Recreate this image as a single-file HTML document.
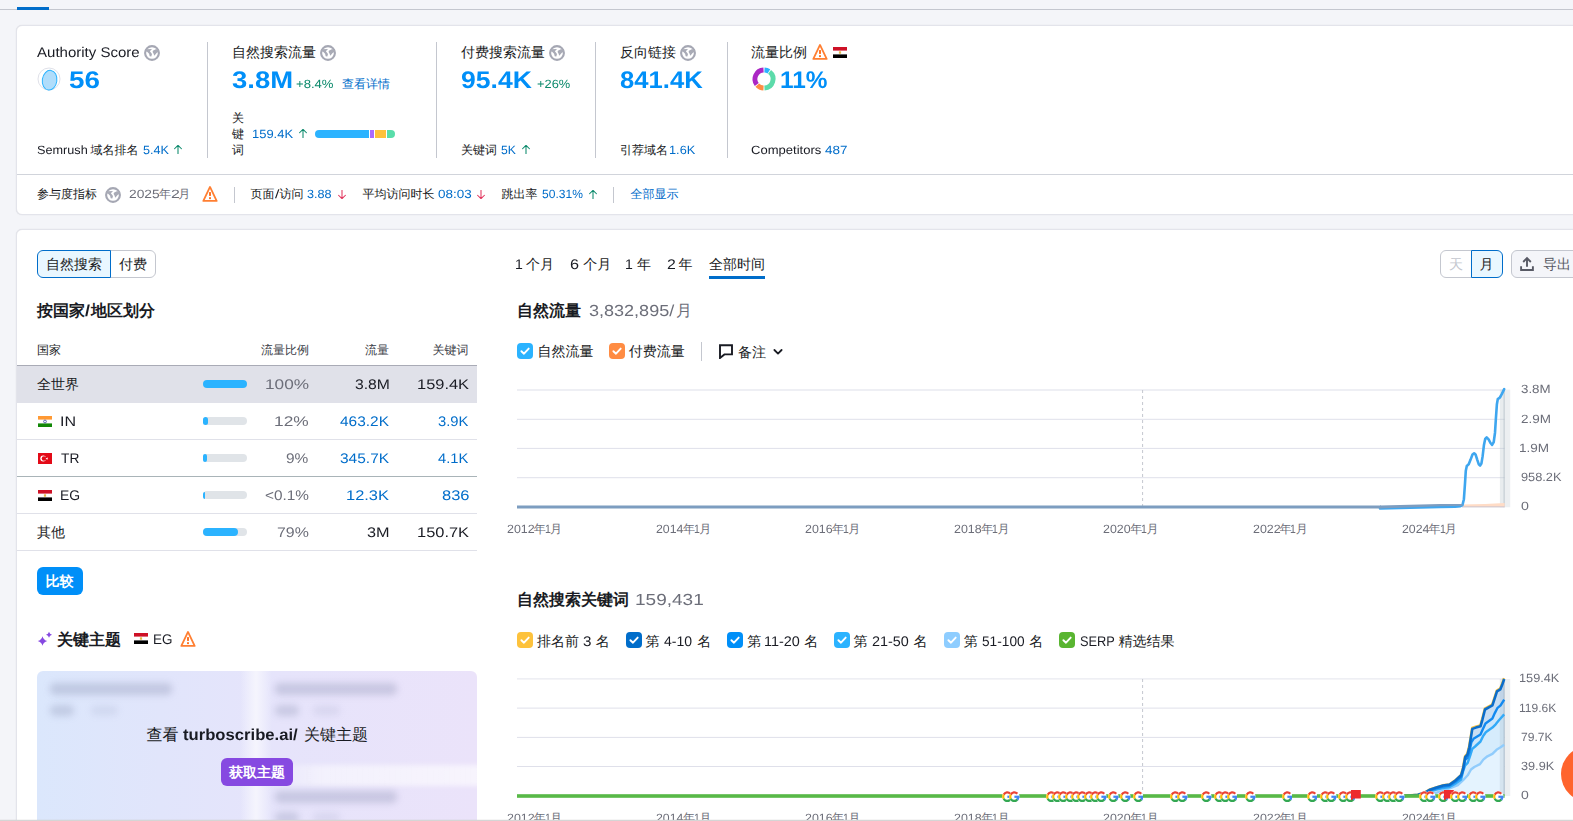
<!DOCTYPE html>
<html><head><meta charset="utf-8"><title>Domain Overview</title>
<style>
html,body{margin:0;padding:0;}
body{width:1573px;height:821px;overflow:hidden;background:#f4f5f9;position:relative;font-family:"Liberation Sans",sans-serif;}
.a{position:absolute;display:block;}
.t{position:absolute;white-space:nowrap;font-family:"Liberation Sans",sans-serif;text-rendering:geometricPrecision;}
.s{transform-origin:0 50%;}
b{font-weight:700;}
</style></head><body>
<div class="a" style="left:0px;top:9px;width:1573px;height:1px;background:#c4c7cf;"></div>
<div class="a" style="left:17px;top:7px;width:32px;height:3px;background:#006dca;"></div>
<div class="a" style="left:16px;top:25px;width:1600px;height:190px;background:#fff;border:1px solid #e3e4eb;border-radius:6px;box-sizing:border-box;box-shadow:0 0 1px rgba(25,27,35,.16);"></div>
<div class="a" style="left:17px;top:174px;width:1556px;height:1px;background:#d1d4db;"></div>
<div class="a" style="left:207px;top:42px;width:1px;height:116px;background:#c4c7cf;"></div>
<div class="a" style="left:436px;top:42px;width:1px;height:116px;background:#c4c7cf;"></div>
<div class="a" style="left:595px;top:42px;width:1px;height:116px;background:#c4c7cf;"></div>
<div class="a" style="left:727px;top:42px;width:1px;height:116px;background:#c4c7cf;"></div>
<div class="t s" style="left:37.40px;top:42.00px;font-size:14px;line-height:20px;color:#191b23;transform:scaleX(1.0733);">Authority Score</div>
<svg class="a" style="left:144px;top:45px;" width="16" height="16" viewBox="0 0 16 16"><circle cx="8" cy="8" r="6.9" fill="none" stroke="#a5a7b3" stroke-width="2.1"/><path d="M1.2 4.2 L8 4.0 L5.9 6.2 L8 9.1 L7.3 11.6 L5.7 11.2 L5.1 8.7 L3.1 6.8 L1.1 6.2 Z" fill="#a9abb6"/><path d="M8.9 5.8 L11.7 4.2 L14.9 4.2 L14.9 6.4 L12.6 7.9 L10.3 10.8 L9.5 8.4 L8.6 7.1 Z" fill="#a9abb6"/></svg>
<svg class="a" style="left:37px;top:67px;" width="24" height="24" viewBox="0 0 24 24"><circle cx="12" cy="12" r="11" fill="#fff" stroke="#e0e1e9" stroke-width="1"/><ellipse cx="12.6" cy="13.2" rx="7.3" ry="9.9" transform="rotate(8 12.6 13.2)" fill="#b0ddfb" stroke="#2bb3ff" stroke-width="1"/></svg>
<div class="t s" style="left:68.53px;top:67.00px;font-size:24px;line-height:28px;color:#008ff8;transform:scaleX(1.1582);font-weight:700;">56</div>
<div class="t s" style="left:36.74px;top:141.00px;font-size:12px;line-height:18px;color:#191b23;transform:scaleX(1.0552);">Semrush</div>
<div class="t" style="left:90.5px;top:141.00px;font-size:12px;line-height:18px;color:#191b23;">域名排名</div>
<div class="t s" style="left:142.57px;top:141.00px;font-size:12px;line-height:18px;color:#006dca;transform:scaleX(1.0500);">5.4K</div>
<svg class="a" style="left:173.5px;top:145.0px;" width="8" height="9" viewBox="0 0 8 9"><path d="M4 8.8 V0.9 M0.55 3.75 L4 0.3 L7.45 3.75" fill="none" stroke="#0c8a6c" stroke-width="1.05" stroke-linecap="round" stroke-linejoin="round"/></svg>
<div class="t" style="left:232px;top:42.00px;font-size:14px;line-height:20px;color:#191b23;">自然搜索流量</div>
<svg class="a" style="left:320px;top:45px;" width="16" height="16" viewBox="0 0 16 16"><circle cx="8" cy="8" r="6.9" fill="none" stroke="#a5a7b3" stroke-width="2.1"/><path d="M1.2 4.2 L8 4.0 L5.9 6.2 L8 9.1 L7.3 11.6 L5.7 11.2 L5.1 8.7 L3.1 6.8 L1.1 6.2 Z" fill="#a9abb6"/><path d="M8.9 5.8 L11.7 4.2 L14.9 4.2 L14.9 6.4 L12.6 7.9 L10.3 10.8 L9.5 8.4 L8.6 7.1 Z" fill="#a9abb6"/></svg>
<div class="t s" style="left:231.88px;top:67.00px;font-size:24px;line-height:28px;color:#008ff8;transform:scaleX(1.1443);font-weight:700;">3.8M</div>
<div class="t s" style="left:296.22px;top:75.00px;font-size:12px;line-height:18px;color:#0c8a6c;transform:scaleX(1.0917);">+8.4%</div>
<div class="t" style="left:342px;top:75.00px;font-size:12px;line-height:18px;color:#006dca;">查看详情</div>
<div class="t" style="left:232px;top:126.00px;font-size:12px;line-height:16px;color:#191b23;height:48px;top:110px;">关<br>键<br>词</div>
<div class="t s" style="left:252.05px;top:125.00px;font-size:12px;line-height:18px;color:#006dca;transform:scaleX(1.0786);">159.4K</div>
<svg class="a" style="left:299px;top:129.0px;" width="8" height="9" viewBox="0 0 8 9"><path d="M4 8.8 V0.9 M0.55 3.75 L4 0.3 L7.45 3.75" fill="none" stroke="#0c8a6c" stroke-width="1.05" stroke-linecap="round" stroke-linejoin="round"/></svg>
<div class="a" style="left:315px;top:130px;width:80px;height:8px;border-radius:4px;overflow:hidden;background:#fff;"><div class="a" style="left:0;top:0;width:54px;height:8px;background:#2bb3ff"></div><div class="a" style="left:55px;top:0;width:4px;height:8px;background:#ab6cfe"></div><div class="a" style="left:60px;top:0;width:11px;height:8px;background:#fdc23c"></div><div class="a" style="left:72px;top:0;width:8px;height:8px;background:#59ddaa"></div></div>
<div class="t" style="left:461px;top:42.00px;font-size:14px;line-height:20px;color:#191b23;">付费搜索流量</div>
<svg class="a" style="left:549px;top:45px;" width="16" height="16" viewBox="0 0 16 16"><circle cx="8" cy="8" r="6.9" fill="none" stroke="#a5a7b3" stroke-width="2.1"/><path d="M1.2 4.2 L8 4.0 L5.9 6.2 L8 9.1 L7.3 11.6 L5.7 11.2 L5.1 8.7 L3.1 6.8 L1.1 6.2 Z" fill="#a9abb6"/><path d="M8.9 5.8 L11.7 4.2 L14.9 4.2 L14.9 6.4 L12.6 7.9 L10.3 10.8 L9.5 8.4 L8.6 7.1 Z" fill="#a9abb6"/></svg>
<div class="t s" style="left:460.73px;top:67.00px;font-size:24px;line-height:28px;color:#008ff8;transform:scaleX(1.1054);font-weight:700;">95.4K</div>
<div class="t s" style="left:537.23px;top:75.00px;font-size:12px;line-height:18px;color:#0c8a6c;transform:scaleX(1.0700);">+26%</div>
<div class="t" style="left:461px;top:141.00px;font-size:12px;line-height:18px;color:#191b23;">关键词</div>
<div class="t s" style="left:500.99px;top:141.00px;font-size:12px;line-height:18px;color:#006dca;transform:scaleX(1.0143);">5K</div>
<svg class="a" style="left:521.5px;top:145.0px;" width="8" height="9" viewBox="0 0 8 9"><path d="M4 8.8 V0.9 M0.55 3.75 L4 0.3 L7.45 3.75" fill="none" stroke="#0c8a6c" stroke-width="1.05" stroke-linecap="round" stroke-linejoin="round"/></svg>
<div class="t" style="left:620px;top:42.00px;font-size:14px;line-height:20px;color:#191b23;">反向链接</div>
<svg class="a" style="left:680px;top:45px;" width="16" height="16" viewBox="0 0 16 16"><circle cx="8" cy="8" r="6.9" fill="none" stroke="#a5a7b3" stroke-width="2.1"/><path d="M1.2 4.2 L8 4.0 L5.9 6.2 L8 9.1 L7.3 11.6 L5.7 11.2 L5.1 8.7 L3.1 6.8 L1.1 6.2 Z" fill="#a9abb6"/><path d="M8.9 5.8 L11.7 4.2 L14.9 4.2 L14.9 6.4 L12.6 7.9 L10.3 10.8 L9.5 8.4 L8.6 7.1 Z" fill="#a9abb6"/></svg>
<div class="t s" style="left:619.60px;top:67.00px;font-size:24px;line-height:28px;color:#008ff8;transform:scaleX(1.0684);font-weight:700;">841.4K</div>
<div class="t" style="left:620px;top:141.00px;font-size:12px;line-height:18px;color:#191b23;">引荐域名</div>
<div class="t s" style="left:668.86px;top:141.00px;font-size:12px;line-height:18px;color:#006dca;transform:scaleX(1.0628);">1.6K</div>
<div class="t" style="left:751px;top:42.00px;font-size:14px;line-height:20px;color:#191b23;">流量比例</div>
<svg class="a" style="left:812.0px;top:44.0px;" width="16" height="16" viewBox="0 0 16 16"><path d="M8 0.95 L14.65 14.9 H1.35 Z" fill="none" stroke="#ff7f32" stroke-width="1.8" stroke-linejoin="round"/><rect x="7" y="6.1" width="2" height="3.8" fill="#ff7424"/><rect x="7" y="11.2" width="2" height="1.9" fill="#ff7424"/></svg>
<svg class="a" style="left:833px;top:47px;" width="14" height="11" viewBox="0 0 14 11"><rect width="14" height="11" fill="#fff"/><rect width="14" height="3.6" fill="#ce1126"/><rect y="7.4" width="14" height="3.6" fill="#000"/><rect x="5.9" y="4.3" width="2.2" height="2.4" fill="#e3b94b"/></svg>
<svg class="a" style="left:750px;top:65px;" width="28" height="28" viewBox="0 0 28 28"><path d="M14.60 2.52 A11.5 11.5 0 0 1 20.26 4.36 L17.59 8.46 A6.6 6.6 0 0 0 14.35 7.41 Z" fill="#2bb3ff"/><path d="M21.08 4.94 A11.5 11.5 0 0 1 14.60 25.48 L14.35 20.59 A6.6 6.6 0 0 0 18.06 8.80 Z" fill="#5cdbaa"/><path d="M13.40 25.48 A11.5 11.5 0 0 1 5.45 21.70 L9.10 18.42 A6.6 6.6 0 0 0 13.65 20.59 Z" fill="#ff8c43"/><path d="M4.82 20.92 A11.5 11.5 0 0 1 13.40 2.52 L13.65 7.41 A6.6 6.6 0 0 0 8.73 17.97 Z" fill="#ab27c4"/></svg>
<div class="t s" style="left:779.52px;top:67.00px;font-size:24px;line-height:28px;color:#008ff8;transform:scaleX(1.0164);font-weight:700;">11%</div>
<div class="t s" style="left:750.72px;top:141.00px;font-size:12px;line-height:18px;color:#191b23;transform:scaleX(1.0861);">Competitors</div>
<div class="t s" style="left:825.22px;top:141.00px;font-size:12px;line-height:18px;color:#006dca;transform:scaleX(1.1242);">487</div>
<div class="t" style="left:37px;top:185.00px;font-size:12px;line-height:18px;color:#191b23;">参与度指标</div>
<svg class="a" style="left:105px;top:187px;" width="16" height="16" viewBox="0 0 16 16"><circle cx="8" cy="8" r="6.9" fill="none" stroke="#a5a7b3" stroke-width="2.1"/><path d="M1.2 4.2 L8 4.0 L5.9 6.2 L8 9.1 L7.3 11.6 L5.7 11.2 L5.1 8.7 L3.1 6.8 L1.1 6.2 Z" fill="#a9abb6"/><path d="M8.9 5.8 L11.7 4.2 L14.9 4.2 L14.9 6.4 L12.6 7.9 L10.3 10.8 L9.5 8.4 L8.6 7.1 Z" fill="#a9abb6"/></svg>
<div class="t s" style="left:129.18px;top:185.00px;font-size:12px;line-height:18px;color:#6c6e79;transform:scaleX(1.1473);">2025</div>
<div class="t" style="left:159.1px;top:185.00px;font-size:12px;line-height:18px;color:#6c6e79;">年</div>
<div class="t s" style="left:170.77px;top:185.00px;font-size:12px;line-height:18px;color:#6c6e79;transform:scaleX(1.3273);">2</div>
<div class="t" style="left:178.3px;top:185.00px;font-size:12px;line-height:18px;color:#6c6e79;">月</div>
<svg class="a" style="left:202.0px;top:186.0px;" width="16" height="16" viewBox="0 0 16 16"><path d="M8 0.95 L14.65 14.9 H1.35 Z" fill="none" stroke="#ff7f32" stroke-width="1.8" stroke-linejoin="round"/><rect x="7" y="6.1" width="2" height="3.8" fill="#ff7424"/><rect x="7" y="11.2" width="2" height="1.9" fill="#ff7424"/></svg>
<div class="a" style="left:234px;top:187px;width:1px;height:16px;background:#c4c7cf;"></div>
<div class="t" style="left:250.5px;top:185.00px;font-size:12px;line-height:18px;color:#191b23;">页面</div>
<div class="t s" style="left:275.30px;top:185.00px;font-size:12px;line-height:18px;color:#191b23;transform:scaleX(1.3231);">/</div>
<div class="t" style="left:279.4px;top:185.00px;font-size:12px;line-height:18px;color:#191b23;">访问</div>
<div class="t s" style="left:307.37px;top:185.00px;font-size:12px;line-height:18px;color:#006dca;transform:scaleX(1.0503);">3.88</div>
<svg class="a" style="left:337.5px;top:189.9px;" width="8" height="9" viewBox="0 0 8 9"><path d="M4 0.2 V8.1 M0.55 5.25 L4 8.7 L7.45 5.25" fill="none" stroke="#e2365e" stroke-width="1.05" stroke-linecap="round" stroke-linejoin="round"/></svg>
<div class="t" style="left:362.5px;top:185.00px;font-size:12px;line-height:18px;color:#191b23;">平均访问时长</div>
<div class="t s" style="left:437.94px;top:185.00px;font-size:12px;line-height:18px;color:#006dca;transform:scaleX(1.1207);">08:03</div>
<svg class="a" style="left:477px;top:189.9px;" width="8" height="9" viewBox="0 0 8 9"><path d="M4 0.2 V8.1 M0.55 5.25 L4 8.7 L7.45 5.25" fill="none" stroke="#e2365e" stroke-width="1.05" stroke-linecap="round" stroke-linejoin="round"/></svg>
<div class="t" style="left:501.5px;top:185.00px;font-size:12px;line-height:18px;color:#191b23;">跳出率</div>
<div class="t s" style="left:541.70px;top:185.00px;font-size:12px;line-height:18px;color:#006dca;transform:scaleX(1.0038);">50.31%</div>
<svg class="a" style="left:588.5px;top:189.6px;" width="8" height="9" viewBox="0 0 8 9"><path d="M4 8.8 V0.9 M0.55 3.75 L4 0.3 L7.45 3.75" fill="none" stroke="#0c8a6c" stroke-width="1.05" stroke-linecap="round" stroke-linejoin="round"/></svg>
<div class="a" style="left:613px;top:187px;width:1px;height:16px;background:#c4c7cf;"></div>
<div class="t" style="left:630.5px;top:185.00px;font-size:12px;line-height:18px;color:#006dca;">全部显示</div>
<div class="a" style="left:16px;top:229px;width:1600px;height:700px;background:#fff;border:1px solid #e3e4eb;border-radius:6px;box-sizing:border-box;box-shadow:0 0 1px rgba(25,27,35,.16);"></div>
<div class="a" style="left:110px;top:250px;width:46px;height:28px;background:#fff;border:1px solid #c4c7cf;border-radius:0 6px 6px 0;box-sizing:border-box;"></div>
<div class="a" style="left:37px;top:250px;width:74px;height:28px;background:#e9f7ff;border:1px solid #006dca;border-radius:6px 0 0 6px;box-sizing:border-box;"></div>
<div class="t" style="left:46px;top:254.00px;font-size:14px;line-height:20px;color:#191b23;">自然搜索</div>
<div class="t" style="left:119px;top:254.00px;font-size:14px;line-height:20px;color:#191b23;">付费</div>
<div class="t" style="left:37px;top:300.00px;font-size:16px;line-height:24px;color:#191b23;font-weight:700;">按国家</div>
<div class="t s" style="left:85.16px;top:300.00px;font-size:16px;line-height:24px;color:#191b23;transform:scaleX(1.1152);font-weight:700;">/</div>
<div class="t" style="left:91px;top:300.00px;font-size:16px;line-height:24px;color:#191b23;font-weight:700;">地区划分</div>
<div class="t" style="left:37px;top:341.00px;font-size:12px;line-height:18px;color:#191b23;">国家</div>
<div class="t" style="right:1264px;top:341.00px;font-size:12px;line-height:18px;color:#3b3d47;text-align:right;">流量比例</div>
<div class="t" style="right:1184px;top:341.00px;font-size:12px;line-height:18px;color:#3b3d47;text-align:right;">流量</div>
<div class="t" style="right:1104.5px;top:341.00px;font-size:12px;line-height:18px;color:#3b3d47;text-align:right;">关键词</div>
<div class="a" style="left:17px;top:365px;width:460px;height:1px;background:#a9abb6;"></div>
<div class="a" style="left:17px;top:366px;width:460px;height:37px;background:#e0e1e9;"></div>
<div class="t" style="left:37px;top:374.00px;font-size:14px;line-height:20px;color:#191b23;">全世界</div>
<div class="a" style="left:203px;top:380.3px;width:44px;height:8px;background:#e0e4e8;border-radius:4px;"></div>
<div class="a" style="left:203px;top:380.3px;width:44px;height:8px;background:#2bb3ff;border-radius:4px;"></div>
<div class="t s" style="left:264.79px;top:374.00px;font-size:14px;line-height:20px;color:#6c6e79;transform:scaleX(1.2286);">100%</div>
<div class="t s" style="left:354.84px;top:374.00px;font-size:14px;line-height:20px;color:#191b23;transform:scaleX(1.1220);">3.8M</div>
<div class="t s" style="left:416.65px;top:374.00px;font-size:14px;line-height:20px;color:#191b23;transform:scaleX(1.1727);">159.4K</div>
<svg class="a" style="left:38px;top:416.3px;" width="14" height="11" viewBox="0 0 14 11"><rect width="14" height="11" fill="#fff"/><rect width="14" height="3.6" fill="#f93"/><rect y="7.4" width="14" height="3.6" fill="#128807"/><circle cx="7" cy="5.5" r="1.4" fill="none" stroke="#3a4aa0" stroke-width="0.8"/></svg>
<div class="t s" style="left:59.97px;top:411.00px;font-size:14px;line-height:20px;color:#191b23;transform:scaleX(1.1441);">IN</div>
<div class="a" style="left:203px;top:417.3px;width:44px;height:8px;background:#e0e4e8;border-radius:4px;"></div>
<div class="a" style="left:203px;top:417.3px;width:5px;height:8px;background:#2bb3ff;border-radius:4px;"></div>
<div class="t s" style="left:274.08px;top:411.00px;font-size:14px;line-height:20px;color:#6c6e79;transform:scaleX(1.2370);">12%</div>
<div class="t s" style="left:339.79px;top:411.00px;font-size:14px;line-height:20px;color:#006dca;transform:scaleX(1.1040);">463.2K</div>
<div class="t s" style="left:438.17px;top:411.00px;font-size:14px;line-height:20px;color:#006dca;transform:scaleX(1.0560);">3.9K</div>
<div class="a" style="left:17px;top:439.0px;width:460px;height:1px;background:#e0e1e9;"></div>
<svg class="a" style="left:38px;top:453.3px;" width="14" height="11" viewBox="0 0 14 11"><rect width="14" height="11" fill="#e30a17"/><circle cx="5.2" cy="5.5" r="2.9" fill="#fff"/><circle cx="6" cy="5.5" r="2.3" fill="#e30a17"/><path d="M7.6 5.5 L10 4.5 L9.3 6.8 Z" fill="#fff"/></svg>
<div class="t s" style="left:61.03px;top:448.00px;font-size:14px;line-height:20px;color:#191b23;transform:scaleX(0.9816);">TR</div>
<div class="a" style="left:203px;top:454.3px;width:44px;height:8px;background:#e0e4e8;border-radius:4px;"></div>
<div class="a" style="left:203px;top:454.3px;width:4px;height:8px;background:#2bb3ff;border-radius:4px;"></div>
<div class="t s" style="left:286.31px;top:448.00px;font-size:14px;line-height:20px;color:#6c6e79;transform:scaleX(1.1033);">9%</div>
<div class="t s" style="left:339.65px;top:448.00px;font-size:14px;line-height:20px;color:#006dca;transform:scaleX(1.1072);">345.7K</div>
<div class="t s" style="left:438.31px;top:448.00px;font-size:14px;line-height:20px;color:#006dca;transform:scaleX(1.0513);">4.1K</div>
<div class="a" style="left:17px;top:476.0px;width:460px;height:1px;background:#a9b4b8;"></div>
<svg class="a" style="left:38px;top:490.3px;" width="14" height="11" viewBox="0 0 14 11"><rect width="14" height="11" fill="#fff"/><rect width="14" height="3.6" fill="#ce1126"/><rect y="7.4" width="14" height="3.6" fill="#000"/><rect x="5.9" y="4.3" width="2.2" height="2.4" fill="#e3b94b"/></svg>
<div class="t s" style="left:60.28px;top:485.00px;font-size:14px;line-height:20px;color:#191b23;transform:scaleX(0.9944);">EG</div>
<div class="a" style="left:203px;top:491.3px;width:44px;height:8px;background:#e0e4e8;border-radius:4px;"></div>
<div class="a" style="left:203px;top:491.8px;width:1.5px;height:7px;background:#2bb3ff;border-radius:2px 0 0 2px;"></div>
<div class="t s" style="left:264.68px;top:485.00px;font-size:14px;line-height:20px;color:#6c6e79;transform:scaleX(1.0958);">&lt;0.1%</div>
<div class="t s" style="left:345.86px;top:485.00px;font-size:14px;line-height:20px;color:#006dca;transform:scaleX(1.1724);">12.3K</div>
<div class="t s" style="left:441.56px;top:485.00px;font-size:14px;line-height:20px;color:#006dca;transform:scaleX(1.1797);">836</div>
<div class="a" style="left:17px;top:513.0px;width:460px;height:1px;background:#e0e1e9;"></div>
<div class="t" style="left:37px;top:522.00px;font-size:14px;line-height:20px;color:#191b23;">其他</div>
<div class="a" style="left:203px;top:528.3px;width:44px;height:8px;background:#e0e4e8;border-radius:4px;"></div>
<div class="a" style="left:203px;top:528.3px;width:35px;height:8px;background:#2bb3ff;border-radius:4px;"></div>
<div class="t s" style="left:276.85px;top:522.00px;font-size:14px;line-height:20px;color:#6c6e79;transform:scaleX(1.1364);">79%</div>
<div class="t s" style="left:367.32px;top:522.00px;font-size:14px;line-height:20px;color:#191b23;transform:scaleX(1.1606);">3M</div>
<div class="t s" style="left:416.65px;top:522.00px;font-size:14px;line-height:20px;color:#191b23;transform:scaleX(1.1727);">150.7K</div>
<div class="a" style="left:17px;top:550.0px;width:460px;height:1px;background:#e0e1e9;"></div>
<div class="a" style="left:37px;top:567px;width:46px;height:28px;background:#008ff8;border-radius:6px;"></div>
<div class="t" style="left:45.5px;top:571.00px;font-size:14px;line-height:20px;color:#fff;font-weight:700;">比较</div>
<svg class="a" style="left:37px;top:631px;" width="16" height="16" viewBox="0 0 16 16"><path d="M5.5 5.2 Q6.46 9.04 10.3 10 Q6.46 10.96 5.5 14.8 Q4.54 10.96 0.7000000000000002 10 Q4.54 9.04 5.5 5.2 Z" fill="#8649e1"/><path d="M12 0.7999999999999998 Q12.6 3.1999999999999997 15.0 3.8 Q12.6 4.4 12 6.8 Q11.4 4.4 9.0 3.8 Q11.4 3.1999999999999997 12 0.7999999999999998 Z" fill="#8649e1"/></svg>
<div class="t" style="left:57px;top:629.00px;font-size:16px;line-height:24px;color:#191b23;font-weight:700;">关键主题</div>
<svg class="a" style="left:134px;top:633px;" width="14" height="11" viewBox="0 0 14 11"><rect width="14" height="11" fill="#fff"/><rect width="14" height="3.6" fill="#ce1126"/><rect y="7.4" width="14" height="3.6" fill="#000"/><rect x="5.9" y="4.3" width="2.2" height="2.4" fill="#e3b94b"/></svg>
<div class="t s" style="left:152.72px;top:629.00px;font-size:14px;line-height:20px;color:#191b23;transform:scaleX(0.9611);">EG</div>
<svg class="a" style="left:180.0px;top:631.0px;" width="16" height="16" viewBox="0 0 16 16"><path d="M8 0.95 L14.65 14.9 H1.35 Z" fill="none" stroke="#ff7f32" stroke-width="1.8" stroke-linejoin="round"/><rect x="7" y="6.1" width="2" height="3.8" fill="#ff7424"/><rect x="7" y="11.2" width="2" height="1.9" fill="#ff7424"/></svg>
<div class="a" style="left:37px;top:671px;width:440px;height:160px;border-radius:6px;overflow:hidden;background:linear-gradient(90deg,#dbe7fc 0%,#e1e5fb 28%,#e6e4fb 55%,#ebe3fa 100%);"><div class="a" style="left:203px;top:0;width:32px;height:160px;background:linear-gradient(90deg,rgba(255,255,255,0),rgba(255,255,255,.62) 50%,rgba(255,255,255,0));"></div><div class="a" style="left:222px;top:94px;width:225px;height:21px;background:linear-gradient(90deg,rgba(255,255,255,0),rgba(255,255,255,.5) 28%,rgba(255,255,255,.62));filter:blur(2.5px);"></div><div class="a" style="left:13px;top:12px;width:122px;height:12px;background:rgba(110,115,155,0.26);filter:blur(3.5px);border-radius:5px;"></div><div class="a" style="left:13px;top:34px;width:24px;height:11px;background:rgba(110,115,155,0.24);filter:blur(3.5px);border-radius:5px;"></div><div class="a" style="left:54px;top:35px;width:27px;height:9px;background:rgba(110,115,155,0.12);filter:blur(3.5px);border-radius:5px;"></div><div class="a" style="left:238px;top:12px;width:122px;height:12px;background:rgba(110,115,155,0.26);filter:blur(3.5px);border-radius:5px;"></div><div class="a" style="left:238px;top:34px;width:24px;height:11px;background:rgba(110,115,155,0.24);filter:blur(3.5px);border-radius:5px;"></div><div class="a" style="left:276px;top:35px;width:27px;height:9px;background:rgba(110,115,155,0.12);filter:blur(3.5px);border-radius:5px;"></div><div class="a" style="left:238px;top:120px;width:122px;height:12px;background:rgba(110,115,155,0.26);filter:blur(3.5px);border-radius:5px;"></div><div class="a" style="left:238px;top:141px;width:24px;height:11px;background:rgba(110,115,155,0.24);filter:blur(3.5px);border-radius:5px;"></div><div class="a" style="left:276px;top:142px;width:27px;height:9px;background:rgba(110,115,155,0.12);filter:blur(3.5px);border-radius:5px;"></div></div>
<div class="t" style="left:146.5px;top:724.00px;font-size:16px;line-height:24px;color:#191b23;">查看</div>
<div class="t s" style="left:182.94px;top:724.00px;font-size:16px;line-height:24px;color:#191b23;transform:scaleX(1.0403);font-weight:700;">turboscribe.ai/</div>
<div class="t" style="left:304px;top:724.00px;font-size:16px;line-height:24px;color:#191b23;">关键主题</div>
<div class="a" style="left:221px;top:758px;width:72px;height:28px;background:#8649e1;border-radius:6px;"></div>
<div class="t" style="left:229px;top:762.00px;font-size:14px;line-height:20px;color:#fff;font-weight:700;">获取主题</div>
<div class="t s" style="left:514.84px;top:254.00px;font-size:14px;line-height:20px;color:#191b23;transform:scaleX(1.0043);">1</div>
<div class="t" style="left:526px;top:254.00px;font-size:14px;line-height:20px;color:#191b23;">个月</div>
<div class="t s" style="left:569.73px;top:254.00px;font-size:14px;line-height:20px;color:#191b23;transform:scaleX(1.1608);">6</div>
<div class="t" style="left:583.2px;top:254.00px;font-size:14px;line-height:20px;color:#191b23;">个月</div>
<div class="t s" style="left:624.84px;top:254.00px;font-size:14px;line-height:20px;color:#191b23;transform:scaleX(1.0043);">1</div>
<div class="t" style="left:637px;top:254.00px;font-size:14px;line-height:20px;color:#191b23;">年</div>
<div class="t s" style="left:666.55px;top:254.00px;font-size:14px;line-height:20px;color:#191b23;transform:scaleX(1.1294);">2</div>
<div class="t" style="left:678.6px;top:254.00px;font-size:14px;line-height:20px;color:#191b23;">年</div>
<div class="t" style="left:709px;top:254.00px;font-size:14px;line-height:20px;color:#191b23;">全部时间</div>
<div class="a" style="left:709px;top:276px;width:56px;height:3px;background:#006dca;"></div>
<div class="a" style="left:1440px;top:250px;width:32px;height:28px;background:#fff;border:1px solid #c4c7cf;border-radius:6px 0 0 6px;box-sizing:border-box;"></div>
<div class="a" style="left:1471px;top:250px;width:32px;height:28px;background:#e9f7ff;border:1px solid #006dca;border-radius:0 6px 6px 0;box-sizing:border-box;"></div>
<div class="t" style="left:1449px;top:254.00px;font-size:14px;line-height:20px;color:#c4c7cf;">天</div>
<div class="t" style="left:1479.6px;top:254.00px;font-size:14px;line-height:20px;color:#191b23;">月</div>
<div class="a" style="left:1511px;top:250px;width:90px;height:28px;background:#f4f5f9;border:1px solid #c4c7cf;border-radius:6px;box-sizing:border-box;"></div>
<svg class="a" style="left:1519px;top:256px;" width="16" height="16" viewBox="0 0 16 16"><path d="M8 10.8 V2.6 M4.2 6 L8 2.2 L11.8 6" fill="none" stroke="#575964" stroke-width="1.9" stroke-linejoin="miter"/><path d="M2.1 10.2 V14 H13.9 V10.2" fill="none" stroke="#575964" stroke-width="1.9"/></svg>
<div class="t" style="left:1543px;top:254.00px;font-size:14px;line-height:20px;color:#575964;">导出</div>
<div class="t" style="left:517px;top:300.00px;font-size:16px;line-height:24px;color:#191b23;font-weight:700;">自然流量</div>
<div class="t s" style="left:589.40px;top:300.00px;font-size:16px;line-height:24px;color:#6c6e79;transform:scaleX(1.1267);">3,832,895/</div>
<div class="t" style="left:676px;top:300.00px;font-size:16px;line-height:24px;color:#6c6e79;">月</div>
<svg class="a" style="left:517px;top:343px;" width="16" height="16" viewBox="0 0 16 16"><rect width="16" height="16" rx="4" fill="#2bb3ff"/><path d="M4.4 8.2 L7 10.7 L11.7 5.6" fill="none" stroke="#fff" stroke-width="1.9" stroke-linecap="round" stroke-linejoin="round"/></svg>
<div class="t" style="left:537.5px;top:341.00px;font-size:14px;line-height:20px;color:#191b23;">自然流量</div>
<svg class="a" style="left:609px;top:343px;" width="16" height="16" viewBox="0 0 16 16"><rect width="16" height="16" rx="4" fill="#ff8c43"/><path d="M4.4 8.2 L7 10.7 L11.7 5.6" fill="none" stroke="#fff" stroke-width="1.9" stroke-linecap="round" stroke-linejoin="round"/></svg>
<div class="t" style="left:628.8px;top:341.00px;font-size:14px;line-height:20px;color:#191b23;">付费流量</div>
<div class="a" style="left:701px;top:342px;width:1px;height:19px;background:#c4c7cf;"></div>
<svg class="a" style="left:718px;top:343px;" width="16" height="16" viewBox="0 0 16 16"><path d="M2 2.2 H14 V11.4 H6.4 L2 15 Z" fill="none" stroke="#191b23" stroke-width="1.9" stroke-linejoin="miter"/></svg>
<div class="t" style="left:738px;top:342.00px;font-size:14px;line-height:20px;color:#191b23;">备注</div>
<svg class="a" style="left:773px;top:347px;" width="10" height="10" viewBox="0 0 10 10"><path d="M1.4 3 L5 6.6 L8.6 3" fill="none" stroke="#191b23" stroke-width="1.8" stroke-linecap="round" stroke-linejoin="round"/></svg>
<div class="t s" style="left:1520.85px;top:380.00px;font-size:12px;line-height:18px;color:#6c6e79;transform:scaleX(1.1089);">3.8M</div>
<div class="t s" style="left:1520.70px;top:410.00px;font-size:12px;line-height:18px;color:#6c6e79;transform:scaleX(1.1224);">2.9M</div>
<div class="t s" style="left:1518.50px;top:439.00px;font-size:12px;line-height:18px;color:#6c6e79;transform:scaleX(1.1300);">1.9M</div>
<div class="t s" style="left:1520.74px;top:468.00px;font-size:12px;line-height:18px;color:#6c6e79;transform:scaleX(1.0631);">958.2K</div>
<div class="t s" style="left:1520.81px;top:497.00px;font-size:12px;line-height:18px;color:#6c6e79;transform:scaleX(1.1826);">0</div>
<div class="t s" style="left:506.95px;top:520.00px;font-size:12px;line-height:18px;color:#6c6e79;transform:scaleX(1.0353);">2012</div><div class="t" style="left:533.8000000000001px;top:520.00px;font-size:12px;line-height:18px;color:#6c6e79;">年</div><div class="t s" style="left:544.73px;top:520.00px;font-size:12px;line-height:18px;color:#6c6e79;transform:scaleX(0.8762);">1</div><div class="t" style="left:550.0px;top:520.00px;font-size:12px;line-height:18px;color:#6c6e79;">月</div>
<div class="t s" style="left:656.09px;top:520.00px;font-size:12px;line-height:18px;color:#6c6e79;transform:scaleX(1.0252);">2014</div><div class="t" style="left:682.9300000000001px;top:520.00px;font-size:12px;line-height:18px;color:#6c6e79;">年</div><div class="t s" style="left:693.86px;top:520.00px;font-size:12px;line-height:18px;color:#6c6e79;transform:scaleX(0.8762);">1</div><div class="t" style="left:699.13px;top:520.00px;font-size:12px;line-height:18px;color:#6c6e79;">月</div>
<div class="t s" style="left:805.21px;top:520.00px;font-size:12px;line-height:18px;color:#6c6e79;transform:scaleX(1.0353);">2016</div><div class="t" style="left:832.0600000000001px;top:520.00px;font-size:12px;line-height:18px;color:#6c6e79;">年</div><div class="t s" style="left:842.99px;top:520.00px;font-size:12px;line-height:18px;color:#6c6e79;transform:scaleX(0.8762);">1</div><div class="t" style="left:848.26px;top:520.00px;font-size:12px;line-height:18px;color:#6c6e79;">月</div>
<div class="t s" style="left:954.34px;top:520.00px;font-size:12px;line-height:18px;color:#6c6e79;transform:scaleX(1.0353);">2018</div><div class="t" style="left:981.19px;top:520.00px;font-size:12px;line-height:18px;color:#6c6e79;">年</div><div class="t s" style="left:992.12px;top:520.00px;font-size:12px;line-height:18px;color:#6c6e79;transform:scaleX(0.8762);">1</div><div class="t" style="left:997.39px;top:520.00px;font-size:12px;line-height:18px;color:#6c6e79;">月</div>
<div class="t s" style="left:1103.48px;top:520.00px;font-size:12px;line-height:18px;color:#6c6e79;transform:scaleX(1.0302);">2020</div><div class="t" style="left:1130.32px;top:520.00px;font-size:12px;line-height:18px;color:#6c6e79;">年</div><div class="t s" style="left:1141.25px;top:520.00px;font-size:12px;line-height:18px;color:#6c6e79;transform:scaleX(0.8762);">1</div><div class="t" style="left:1146.52px;top:520.00px;font-size:12px;line-height:18px;color:#6c6e79;">月</div>
<div class="t s" style="left:1252.60px;top:520.00px;font-size:12px;line-height:18px;color:#6c6e79;transform:scaleX(1.0353);">2022</div><div class="t" style="left:1279.45px;top:520.00px;font-size:12px;line-height:18px;color:#6c6e79;">年</div><div class="t s" style="left:1290.38px;top:520.00px;font-size:12px;line-height:18px;color:#6c6e79;transform:scaleX(0.8762);">1</div><div class="t" style="left:1295.65px;top:520.00px;font-size:12px;line-height:18px;color:#6c6e79;">月</div>
<div class="t s" style="left:1401.74px;top:520.00px;font-size:12px;line-height:18px;color:#6c6e79;transform:scaleX(1.0252);">2024</div><div class="t" style="left:1428.5800000000002px;top:520.00px;font-size:12px;line-height:18px;color:#6c6e79;">年</div><div class="t s" style="left:1439.51px;top:520.00px;font-size:12px;line-height:18px;color:#6c6e79;transform:scaleX(0.8762);">1</div><div class="t" style="left:1444.7800000000002px;top:520.00px;font-size:12px;line-height:18px;color:#6c6e79;">月</div>
<svg class="a" style="left:500px;top:380px;" width="1020" height="130" viewBox="0 0 1020 130"><line x1="17" y1="10.0" x2="1004.5999999999999" y2="10.0" stroke="#e9eaf0" stroke-width="1.3"/><line x1="17" y1="39.3" x2="1004.5999999999999" y2="39.3" stroke="#dfe0ea" stroke-width="1"/><line x1="17" y1="68.4" x2="1004.5999999999999" y2="68.4" stroke="#dfe0ea" stroke-width="1"/><line x1="17" y1="97.7" x2="1004.5999999999999" y2="97.7" stroke="#dfe0ea" stroke-width="1"/><line x1="642.5999999999999" y1="10" x2="642.5999999999999" y2="127" stroke="#c4c7cf" stroke-width="1" stroke-dasharray="3 3"/><rect x="999.9000000000001" y="9.6" width="4.7" height="117.6" fill="#b7c3c9" opacity=".32"/><rect x="1003.5999999999999" y="9.6" width="1.2" height="117.6" fill="#9aa9b3" opacity=".5"/><rect x="1004.8" y="9.6" width="5.4" height="117.6" fill="#dfe5e8" opacity=".6"/><polygon points="900.0,127.0 930.0,125.6 962.0,124.4 985.0,123.9 1004.6,123.1 1004.6,127.0 900.0,127.0" fill="#ffdcc6"/><line x1="962" y1="126.9" x2="1004.5999999999999" y2="126.9" stroke="#c9c4cf" stroke-width="1"/><polyline points="880.0,128.4 910.0,127.7 940.0,126.9 955.0,126.6 960.5,126.1 962.4,125.2 963.9,119.2 965.0,103.3 965.8,90.7 966.8,85.9 968.7,84.3 970.6,79.6 972.5,74.5 974.1,73.3 975.7,74.8 977.2,79.6 978.8,84.3 980.1,85.6 981.4,83.6 982.6,76.4 983.9,65.3 985.2,59.0 986.7,57.4 988.6,59.3 990.5,63.0 992.1,64.9 993.7,62.2 995.0,52.7 995.9,38.4 996.9,24.2 997.8,19.1 999.9,17.5 1001.9,13.9 1004.2,9.1" fill="none" stroke="#3ea6ef" stroke-width="2.6" stroke-linejoin="round" stroke-linecap="round"/><rect x="17" y="125.5" width="864" height="3" fill="#7d9dc0"/><polygon points="880.0,125.5 940.0,123.9 962.6,123.9 962.6,125.8 940.0,126.2 880.0,128.5" fill="#7d9dc0"/></svg>
<div class="t" style="left:517px;top:589.00px;font-size:16px;line-height:24px;color:#191b23;font-weight:700;">自然搜索关键词</div>
<div class="t s" style="left:634.77px;top:589.00px;font-size:16px;line-height:24px;color:#6c6e79;transform:scaleX(1.1882);">159,431</div>
<svg class="a" style="left:517.1px;top:632.1px;" width="16" height="16" viewBox="0 0 16 16"><rect width="16" height="16" rx="4" fill="#fdc23c"/><path d="M4.4 8.2 L7 10.7 L11.7 5.6" fill="none" stroke="#fff" stroke-width="1.9" stroke-linecap="round" stroke-linejoin="round"/></svg>
<svg class="a" style="left:626px;top:632.1px;" width="16" height="16" viewBox="0 0 16 16"><rect width="16" height="16" rx="4" fill="#006dca"/><path d="M4.4 8.2 L7 10.7 L11.7 5.6" fill="none" stroke="#fff" stroke-width="1.9" stroke-linecap="round" stroke-linejoin="round"/></svg>
<svg class="a" style="left:727.2px;top:632.1px;" width="16" height="16" viewBox="0 0 16 16"><rect width="16" height="16" rx="4" fill="#008ff8"/><path d="M4.4 8.2 L7 10.7 L11.7 5.6" fill="none" stroke="#fff" stroke-width="1.9" stroke-linecap="round" stroke-linejoin="round"/></svg>
<svg class="a" style="left:834.1px;top:632.1px;" width="16" height="16" viewBox="0 0 16 16"><rect width="16" height="16" rx="4" fill="#2bb3ff"/><path d="M4.4 8.2 L7 10.7 L11.7 5.6" fill="none" stroke="#fff" stroke-width="1.9" stroke-linecap="round" stroke-linejoin="round"/></svg>
<svg class="a" style="left:944.4px;top:632.1px;" width="16" height="16" viewBox="0 0 16 16"><rect width="16" height="16" rx="4" fill="#8ecdff"/><path d="M4.4 8.2 L7 10.7 L11.7 5.6" fill="none" stroke="#fff" stroke-width="1.9" stroke-linecap="round" stroke-linejoin="round"/></svg>
<svg class="a" style="left:1059.2px;top:632.1px;" width="16" height="16" viewBox="0 0 16 16"><rect width="16" height="16" rx="4" fill="#59b531"/><path d="M4.4 8.2 L7 10.7 L11.7 5.6" fill="none" stroke="#fff" stroke-width="1.9" stroke-linecap="round" stroke-linejoin="round"/></svg>
<div class="t" style="left:537px;top:631.00px;font-size:14px;line-height:20px;color:#191b23;">排名前</div>
<div class="t s" style="left:582.86px;top:631.00px;font-size:14px;line-height:20px;color:#191b23;transform:scaleX(1.0868);">3</div>
<div class="t" style="left:595.8px;top:631.00px;font-size:14px;line-height:20px;color:#191b23;">名</div>
<div class="t" style="left:645.6px;top:631.00px;font-size:14px;line-height:20px;color:#191b23;">第</div>
<div class="t s" style="left:663.82px;top:631.00px;font-size:14px;line-height:20px;color:#191b23;transform:scaleX(1.0028);">4-10</div>
<div class="t" style="left:697.2px;top:631.00px;font-size:14px;line-height:20px;color:#191b23;">名</div>
<div class="t" style="left:747.2px;top:631.00px;font-size:14px;line-height:20px;color:#191b23;">第</div>
<div class="t s" style="left:764.02px;top:631.00px;font-size:14px;line-height:20px;color:#191b23;transform:scaleX(1.0302);">11-20</div>
<div class="t" style="left:804.3px;top:631.00px;font-size:14px;line-height:20px;color:#191b23;">名</div>
<div class="t" style="left:853.6px;top:631.00px;font-size:14px;line-height:20px;color:#191b23;">第</div>
<div class="t s" style="left:872.23px;top:631.00px;font-size:14px;line-height:20px;color:#191b23;transform:scaleX(1.0290);">21-50</div>
<div class="t" style="left:913.6px;top:631.00px;font-size:14px;line-height:20px;color:#191b23;">名</div>
<div class="t" style="left:963.8px;top:631.00px;font-size:14px;line-height:20px;color:#191b23;">第</div>
<div class="t s" style="left:982.09px;top:631.00px;font-size:14px;line-height:20px;color:#191b23;transform:scaleX(0.9770);">51-100</div>
<div class="t" style="left:1029.2px;top:631.00px;font-size:14px;line-height:20px;color:#191b23;">名</div>
<div class="t s" style="left:1079.63px;top:631.00px;font-size:14px;line-height:20px;color:#191b23;transform:scaleX(0.9143);">SERP</div>
<div class="t" style="left:1118.6px;top:631.00px;font-size:14px;line-height:20px;color:#191b23;">精选结果</div>
<div class="t s" style="left:1518.66px;top:669.00px;font-size:12px;line-height:18px;color:#6c6e79;transform:scaleX(1.0597);">159.4K</div>
<div class="t s" style="left:1518.71px;top:699.00px;font-size:12px;line-height:18px;color:#6c6e79;transform:scaleX(1.0023);">119.6K</div>
<div class="t s" style="left:1520.87px;top:728.00px;font-size:12px;line-height:18px;color:#6c6e79;transform:scaleX(1.0098);">79.7K</div>
<div class="t s" style="left:1520.97px;top:757.00px;font-size:12px;line-height:18px;color:#6c6e79;transform:scaleX(1.0580);">39.9K</div>
<div class="t s" style="left:1520.92px;top:786.00px;font-size:12px;line-height:18px;color:#6c6e79;transform:scaleX(1.1652);">0</div>
<div class="t s" style="left:506.95px;top:809.00px;font-size:12px;line-height:18px;color:#6c6e79;transform:scaleX(1.0353);">2012</div><div class="t" style="left:533.8000000000001px;top:809.00px;font-size:12px;line-height:18px;color:#6c6e79;">年</div><div class="t s" style="left:544.73px;top:809.00px;font-size:12px;line-height:18px;color:#6c6e79;transform:scaleX(0.8762);">1</div><div class="t" style="left:550.0px;top:809.00px;font-size:12px;line-height:18px;color:#6c6e79;">月</div>
<div class="t s" style="left:656.09px;top:809.00px;font-size:12px;line-height:18px;color:#6c6e79;transform:scaleX(1.0252);">2014</div><div class="t" style="left:682.9300000000001px;top:809.00px;font-size:12px;line-height:18px;color:#6c6e79;">年</div><div class="t s" style="left:693.86px;top:809.00px;font-size:12px;line-height:18px;color:#6c6e79;transform:scaleX(0.8762);">1</div><div class="t" style="left:699.13px;top:809.00px;font-size:12px;line-height:18px;color:#6c6e79;">月</div>
<div class="t s" style="left:805.21px;top:809.00px;font-size:12px;line-height:18px;color:#6c6e79;transform:scaleX(1.0353);">2016</div><div class="t" style="left:832.0600000000001px;top:809.00px;font-size:12px;line-height:18px;color:#6c6e79;">年</div><div class="t s" style="left:842.99px;top:809.00px;font-size:12px;line-height:18px;color:#6c6e79;transform:scaleX(0.8762);">1</div><div class="t" style="left:848.26px;top:809.00px;font-size:12px;line-height:18px;color:#6c6e79;">月</div>
<div class="t s" style="left:954.34px;top:809.00px;font-size:12px;line-height:18px;color:#6c6e79;transform:scaleX(1.0353);">2018</div><div class="t" style="left:981.19px;top:809.00px;font-size:12px;line-height:18px;color:#6c6e79;">年</div><div class="t s" style="left:992.12px;top:809.00px;font-size:12px;line-height:18px;color:#6c6e79;transform:scaleX(0.8762);">1</div><div class="t" style="left:997.39px;top:809.00px;font-size:12px;line-height:18px;color:#6c6e79;">月</div>
<div class="t s" style="left:1103.48px;top:809.00px;font-size:12px;line-height:18px;color:#6c6e79;transform:scaleX(1.0302);">2020</div><div class="t" style="left:1130.32px;top:809.00px;font-size:12px;line-height:18px;color:#6c6e79;">年</div><div class="t s" style="left:1141.25px;top:809.00px;font-size:12px;line-height:18px;color:#6c6e79;transform:scaleX(0.8762);">1</div><div class="t" style="left:1146.52px;top:809.00px;font-size:12px;line-height:18px;color:#6c6e79;">月</div>
<div class="t s" style="left:1252.60px;top:809.00px;font-size:12px;line-height:18px;color:#6c6e79;transform:scaleX(1.0353);">2022</div><div class="t" style="left:1279.45px;top:809.00px;font-size:12px;line-height:18px;color:#6c6e79;">年</div><div class="t s" style="left:1290.38px;top:809.00px;font-size:12px;line-height:18px;color:#6c6e79;transform:scaleX(0.8762);">1</div><div class="t" style="left:1295.65px;top:809.00px;font-size:12px;line-height:18px;color:#6c6e79;">月</div>
<div class="t s" style="left:1401.74px;top:809.00px;font-size:12px;line-height:18px;color:#6c6e79;transform:scaleX(1.0252);">2024</div><div class="t" style="left:1428.5800000000002px;top:809.00px;font-size:12px;line-height:18px;color:#6c6e79;">年</div><div class="t s" style="left:1439.51px;top:809.00px;font-size:12px;line-height:18px;color:#6c6e79;transform:scaleX(0.8762);">1</div><div class="t" style="left:1444.7800000000002px;top:809.00px;font-size:12px;line-height:18px;color:#6c6e79;">月</div>
<svg class="a" style="left:500px;top:670px;" width="1020" height="135" viewBox="0 0 1020 135"><line x1="17" y1="8.9" x2="1004.5999999999999" y2="8.9" stroke="#e9eaf0" stroke-width="1.3"/><line x1="17" y1="38.1" x2="1004.5999999999999" y2="38.1" stroke="#dfe0ea" stroke-width="1"/><line x1="17" y1="67.4" x2="1004.5999999999999" y2="67.4" stroke="#dfe0ea" stroke-width="1"/><line x1="17" y1="96.5" x2="1004.5999999999999" y2="96.5" stroke="#dfe0ea" stroke-width="1"/><line x1="642.5999999999999" y1="9" x2="642.5999999999999" y2="126" stroke="#c4c7cf" stroke-width="1" stroke-dasharray="3 3"/><polygon points="904.0,126.0 918.0,124.8 925.0,122.6 929.9,119.7 936.4,117.6 943.0,115.5 949.6,114.6 955.4,110.5 961.1,105.3 963.1,98.7 965.2,87.2 967.4,84.7 969.3,77.3 972.3,58.9 975.9,57.6 980.5,56.3 982.5,49.3 985.0,39.5 992.4,35.4 994.3,29.6 997.0,21.4 1000.3,19.4 1002.2,14.8 1004.2,9.0 1004.2,126.0 904.0,126.0" fill="#c9def3"/><polygon points="904.0,126.0 918.0,125.0 925.0,123.2 929.9,120.4 936.4,118.4 943.0,116.5 949.6,115.6 955.4,111.8 961.1,107.0 963.1,100.5 965.2,89.6 967.4,88.0 969.3,82.2 971.3,72.4 973.5,68.8 980.5,64.5 982.8,59.2 985.5,53.5 992.4,48.5 994.8,43.1 997.3,38.2 1000.6,35.4 1004.2,29.6 1004.2,126.0 904.0,126.0" fill="#cde6fa"/><polygon points="904.0,126.0 918.0,125.3 925.0,123.8 929.9,121.4 936.4,119.6 943.0,118.0 949.6,117.0 955.4,113.8 961.1,109.5 963.1,101.2 965.2,95.4 967.7,92.9 970.2,85.5 972.3,78.9 975.1,76.5 980.5,71.5 983.3,65.8 985.8,62.2 992.4,57.6 995.7,54.3 998.9,50.2 1004.2,44.4 1004.2,126.0 904.0,126.0" fill="#d6ecfc"/><polygon points="904.0,126.0 922.0,125.6 936.0,122.8 949.6,118.4 957.8,115.1 963.1,110.2 967.7,105.3 971.0,99.5 974.3,97.0 980.0,94.1 983.3,89.6 987.4,86.3 992.4,83.9 996.5,79.8 1000.6,77.3 1004.2,74.8 1004.2,126.0 904.0,126.0" fill="#e4f3fe"/><rect x="999.8" y="9" width="4.9" height="117" fill="#a9b8c4" opacity=".26"/><rect x="1003.6" y="9" width="1.2" height="117" fill="#8fa0ad" opacity=".5"/><rect x="1004.8" y="9" width="5.4" height="117" fill="#dfe5e8" opacity=".6"/><polyline points="904.0,126.0 922.0,125.6 936.0,122.8 949.6,118.4 957.8,115.1 963.1,110.2 967.7,105.3 971.0,99.5 974.3,97.0 980.0,94.1 983.3,89.6 987.4,86.3 992.4,83.9 996.5,79.8 1000.6,77.3 1004.2,74.8" fill="none" stroke="#90ccfc" stroke-width="2.4" stroke-linejoin="round"/><polyline points="904.0,126.0 918.0,125.3 925.0,123.8 929.9,121.4 936.4,119.6 943.0,118.0 949.6,117.0 955.4,113.8 961.1,109.5 963.1,101.2 965.2,95.4 967.7,92.9 970.2,85.5 972.3,78.9 975.1,76.5 980.5,71.5 983.3,65.8 985.8,62.2 992.4,57.6 995.7,54.3 998.9,50.2 1004.2,44.4" fill="none" stroke="#33aaf8" stroke-width="2.4" stroke-linejoin="round"/><polyline points="904.0,126.0 918.0,125.0 925.0,123.2 929.9,120.4 936.4,118.4 943.0,116.5 949.6,115.6 955.4,111.8 961.1,107.0 963.1,100.5 965.2,89.6 967.4,88.0 969.3,82.2 971.3,72.4 973.5,68.8 980.5,64.5 982.8,59.2 985.5,53.5 992.4,48.5 994.8,43.1 997.3,38.2 1000.6,35.4 1004.2,29.6" fill="none" stroke="#1289f0" stroke-width="2.4" stroke-linejoin="round"/><polyline points="903.7,125.7 917.7,124.5 924.7,122.3 929.6,119.4 936.1,117.3 942.7,115.2 949.3,114.3 955.1,110.2 960.8,105.0 962.8,97.7 964.9,86.2 967.1,83.7 969.0,76.3 972.0,57.9 975.6,56.6 980.2,55.3 982.2,48.3 984.7,38.5 992.1,34.4 994.0,28.6 996.7,20.4 1000.0,18.4 1001.9,13.8 1003.9,8.0" fill="none" stroke="#fdc23c" stroke-width="2.2" stroke-linejoin="round"/><polyline points="904.0,126.0 918.0,124.8 925.0,122.6 929.9,119.7 936.4,117.6 943.0,115.5 949.6,114.6 955.4,110.5 961.1,105.3 963.1,98.7 965.2,87.2 967.4,84.7 969.3,77.3 972.3,58.9 975.9,57.6 980.5,56.3 982.5,49.3 985.0,39.5 992.4,35.4 994.3,29.6 997.0,21.4 1000.3,19.4 1002.2,14.8 1004.2,9.0" fill="none" stroke="#0b6dcb" stroke-width="2.6" stroke-linejoin="round"/><rect x="17" y="124.2" width="987.5999999999999" height="3.6" fill="#58b947"/></svg>
<svg class="a" style="left:1002.1px;top:790.5px;" width="10.6" height="11.4" viewBox="0 0 12 12" preserveAspectRatio="none"><circle cx="6" cy="6" r="6" fill="#fff"/><path d="M1.98 3.86 A4.55 4.55 0 0 1 9.38 2.96" fill="none" stroke="#ea4335" stroke-width="2.5"/><path d="M1.98 8.14 A4.55 4.55 0 0 1 1.98 3.86" fill="none" stroke="#fbbc05" stroke-width="2.5"/><path d="M9.59 8.80 A4.55 4.55 0 0 1 1.98 8.14" fill="none" stroke="#34a853" stroke-width="2.5"/><path d="M10.55 5.84 A4.55 4.55 0 0 1 9.38 9.04" fill="none" stroke="#4285f4" stroke-width="2.5"/><rect x="6.1" y="4.9" width="5.7" height="2.35" fill="#4285f4"/></svg><svg class="a" style="left:1009.0px;top:790.5px;" width="10.6" height="11.4" viewBox="0 0 12 12" preserveAspectRatio="none"><circle cx="6" cy="6" r="6" fill="#fff"/><path d="M1.98 3.86 A4.55 4.55 0 0 1 9.38 2.96" fill="none" stroke="#ea4335" stroke-width="2.5"/><path d="M1.98 8.14 A4.55 4.55 0 0 1 1.98 3.86" fill="none" stroke="#fbbc05" stroke-width="2.5"/><path d="M9.59 8.80 A4.55 4.55 0 0 1 1.98 8.14" fill="none" stroke="#34a853" stroke-width="2.5"/><path d="M10.55 5.84 A4.55 4.55 0 0 1 9.38 9.04" fill="none" stroke="#4285f4" stroke-width="2.5"/><rect x="6.1" y="4.9" width="5.7" height="2.35" fill="#4285f4"/></svg><svg class="a" style="left:1045.6000000000001px;top:790.5px;" width="10.6" height="11.4" viewBox="0 0 12 12" preserveAspectRatio="none"><circle cx="6" cy="6" r="6" fill="#fff"/><path d="M1.98 3.86 A4.55 4.55 0 0 1 9.38 2.96" fill="none" stroke="#ea4335" stroke-width="2.5"/><path d="M1.98 8.14 A4.55 4.55 0 0 1 1.98 3.86" fill="none" stroke="#fbbc05" stroke-width="2.5"/><path d="M9.59 8.80 A4.55 4.55 0 0 1 1.98 8.14" fill="none" stroke="#34a853" stroke-width="2.5"/><path d="M10.55 5.84 A4.55 4.55 0 0 1 9.38 9.04" fill="none" stroke="#4285f4" stroke-width="2.5"/><rect x="6.1" y="4.9" width="5.7" height="2.35" fill="#4285f4"/></svg><svg class="a" style="left:1051.96px;top:790.5px;" width="10.6" height="11.4" viewBox="0 0 12 12" preserveAspectRatio="none"><circle cx="6" cy="6" r="6" fill="#fff"/><path d="M1.98 3.86 A4.55 4.55 0 0 1 9.38 2.96" fill="none" stroke="#ea4335" stroke-width="2.5"/><path d="M1.98 8.14 A4.55 4.55 0 0 1 1.98 3.86" fill="none" stroke="#fbbc05" stroke-width="2.5"/><path d="M9.59 8.80 A4.55 4.55 0 0 1 1.98 8.14" fill="none" stroke="#34a853" stroke-width="2.5"/><path d="M10.55 5.84 A4.55 4.55 0 0 1 9.38 9.04" fill="none" stroke="#4285f4" stroke-width="2.5"/><rect x="6.1" y="4.9" width="5.7" height="2.35" fill="#4285f4"/></svg><svg class="a" style="left:1058.3200000000002px;top:790.5px;" width="10.6" height="11.4" viewBox="0 0 12 12" preserveAspectRatio="none"><circle cx="6" cy="6" r="6" fill="#fff"/><path d="M1.98 3.86 A4.55 4.55 0 0 1 9.38 2.96" fill="none" stroke="#ea4335" stroke-width="2.5"/><path d="M1.98 8.14 A4.55 4.55 0 0 1 1.98 3.86" fill="none" stroke="#fbbc05" stroke-width="2.5"/><path d="M9.59 8.80 A4.55 4.55 0 0 1 1.98 8.14" fill="none" stroke="#34a853" stroke-width="2.5"/><path d="M10.55 5.84 A4.55 4.55 0 0 1 9.38 9.04" fill="none" stroke="#4285f4" stroke-width="2.5"/><rect x="6.1" y="4.9" width="5.7" height="2.35" fill="#4285f4"/></svg><svg class="a" style="left:1064.68px;top:790.5px;" width="10.6" height="11.4" viewBox="0 0 12 12" preserveAspectRatio="none"><circle cx="6" cy="6" r="6" fill="#fff"/><path d="M1.98 3.86 A4.55 4.55 0 0 1 9.38 2.96" fill="none" stroke="#ea4335" stroke-width="2.5"/><path d="M1.98 8.14 A4.55 4.55 0 0 1 1.98 3.86" fill="none" stroke="#fbbc05" stroke-width="2.5"/><path d="M9.59 8.80 A4.55 4.55 0 0 1 1.98 8.14" fill="none" stroke="#34a853" stroke-width="2.5"/><path d="M10.55 5.84 A4.55 4.55 0 0 1 9.38 9.04" fill="none" stroke="#4285f4" stroke-width="2.5"/><rect x="6.1" y="4.9" width="5.7" height="2.35" fill="#4285f4"/></svg><svg class="a" style="left:1071.0400000000002px;top:790.5px;" width="10.6" height="11.4" viewBox="0 0 12 12" preserveAspectRatio="none"><circle cx="6" cy="6" r="6" fill="#fff"/><path d="M1.98 3.86 A4.55 4.55 0 0 1 9.38 2.96" fill="none" stroke="#ea4335" stroke-width="2.5"/><path d="M1.98 8.14 A4.55 4.55 0 0 1 1.98 3.86" fill="none" stroke="#fbbc05" stroke-width="2.5"/><path d="M9.59 8.80 A4.55 4.55 0 0 1 1.98 8.14" fill="none" stroke="#34a853" stroke-width="2.5"/><path d="M10.55 5.84 A4.55 4.55 0 0 1 9.38 9.04" fill="none" stroke="#4285f4" stroke-width="2.5"/><rect x="6.1" y="4.9" width="5.7" height="2.35" fill="#4285f4"/></svg><svg class="a" style="left:1077.4px;top:790.5px;" width="10.6" height="11.4" viewBox="0 0 12 12" preserveAspectRatio="none"><circle cx="6" cy="6" r="6" fill="#fff"/><path d="M1.98 3.86 A4.55 4.55 0 0 1 9.38 2.96" fill="none" stroke="#ea4335" stroke-width="2.5"/><path d="M1.98 8.14 A4.55 4.55 0 0 1 1.98 3.86" fill="none" stroke="#fbbc05" stroke-width="2.5"/><path d="M9.59 8.80 A4.55 4.55 0 0 1 1.98 8.14" fill="none" stroke="#34a853" stroke-width="2.5"/><path d="M10.55 5.84 A4.55 4.55 0 0 1 9.38 9.04" fill="none" stroke="#4285f4" stroke-width="2.5"/><rect x="6.1" y="4.9" width="5.7" height="2.35" fill="#4285f4"/></svg><svg class="a" style="left:1083.7600000000002px;top:790.5px;" width="10.6" height="11.4" viewBox="0 0 12 12" preserveAspectRatio="none"><circle cx="6" cy="6" r="6" fill="#fff"/><path d="M1.98 3.86 A4.55 4.55 0 0 1 9.38 2.96" fill="none" stroke="#ea4335" stroke-width="2.5"/><path d="M1.98 8.14 A4.55 4.55 0 0 1 1.98 3.86" fill="none" stroke="#fbbc05" stroke-width="2.5"/><path d="M9.59 8.80 A4.55 4.55 0 0 1 1.98 8.14" fill="none" stroke="#34a853" stroke-width="2.5"/><path d="M10.55 5.84 A4.55 4.55 0 0 1 9.38 9.04" fill="none" stroke="#4285f4" stroke-width="2.5"/><rect x="6.1" y="4.9" width="5.7" height="2.35" fill="#4285f4"/></svg><svg class="a" style="left:1090.1200000000001px;top:790.5px;" width="10.6" height="11.4" viewBox="0 0 12 12" preserveAspectRatio="none"><circle cx="6" cy="6" r="6" fill="#fff"/><path d="M1.98 3.86 A4.55 4.55 0 0 1 9.38 2.96" fill="none" stroke="#ea4335" stroke-width="2.5"/><path d="M1.98 8.14 A4.55 4.55 0 0 1 1.98 3.86" fill="none" stroke="#fbbc05" stroke-width="2.5"/><path d="M9.59 8.80 A4.55 4.55 0 0 1 1.98 8.14" fill="none" stroke="#34a853" stroke-width="2.5"/><path d="M10.55 5.84 A4.55 4.55 0 0 1 9.38 9.04" fill="none" stroke="#4285f4" stroke-width="2.5"/><rect x="6.1" y="4.9" width="5.7" height="2.35" fill="#4285f4"/></svg><svg class="a" style="left:1096.4800000000002px;top:790.5px;" width="10.6" height="11.4" viewBox="0 0 12 12" preserveAspectRatio="none"><circle cx="6" cy="6" r="6" fill="#fff"/><path d="M1.98 3.86 A4.55 4.55 0 0 1 9.38 2.96" fill="none" stroke="#ea4335" stroke-width="2.5"/><path d="M1.98 8.14 A4.55 4.55 0 0 1 1.98 3.86" fill="none" stroke="#fbbc05" stroke-width="2.5"/><path d="M9.59 8.80 A4.55 4.55 0 0 1 1.98 8.14" fill="none" stroke="#34a853" stroke-width="2.5"/><path d="M10.55 5.84 A4.55 4.55 0 0 1 9.38 9.04" fill="none" stroke="#4285f4" stroke-width="2.5"/><rect x="6.1" y="4.9" width="5.7" height="2.35" fill="#4285f4"/></svg><svg class="a" style="left:1108.2px;top:790.5px;" width="10.6" height="11.4" viewBox="0 0 12 12" preserveAspectRatio="none"><circle cx="6" cy="6" r="6" fill="#fff"/><path d="M1.98 3.86 A4.55 4.55 0 0 1 9.38 2.96" fill="none" stroke="#ea4335" stroke-width="2.5"/><path d="M1.98 8.14 A4.55 4.55 0 0 1 1.98 3.86" fill="none" stroke="#fbbc05" stroke-width="2.5"/><path d="M9.59 8.80 A4.55 4.55 0 0 1 1.98 8.14" fill="none" stroke="#34a853" stroke-width="2.5"/><path d="M10.55 5.84 A4.55 4.55 0 0 1 9.38 9.04" fill="none" stroke="#4285f4" stroke-width="2.5"/><rect x="6.1" y="4.9" width="5.7" height="2.35" fill="#4285f4"/></svg><svg class="a" style="left:1120.4px;top:790.5px;" width="10.6" height="11.4" viewBox="0 0 12 12" preserveAspectRatio="none"><circle cx="6" cy="6" r="6" fill="#fff"/><path d="M1.98 3.86 A4.55 4.55 0 0 1 9.38 2.96" fill="none" stroke="#ea4335" stroke-width="2.5"/><path d="M1.98 8.14 A4.55 4.55 0 0 1 1.98 3.86" fill="none" stroke="#fbbc05" stroke-width="2.5"/><path d="M9.59 8.80 A4.55 4.55 0 0 1 1.98 8.14" fill="none" stroke="#34a853" stroke-width="2.5"/><path d="M10.55 5.84 A4.55 4.55 0 0 1 9.38 9.04" fill="none" stroke="#4285f4" stroke-width="2.5"/><rect x="6.1" y="4.9" width="5.7" height="2.35" fill="#4285f4"/></svg><svg class="a" style="left:1132.9px;top:790.5px;" width="10.6" height="11.4" viewBox="0 0 12 12" preserveAspectRatio="none"><circle cx="6" cy="6" r="6" fill="#fff"/><path d="M1.98 3.86 A4.55 4.55 0 0 1 9.38 2.96" fill="none" stroke="#ea4335" stroke-width="2.5"/><path d="M1.98 8.14 A4.55 4.55 0 0 1 1.98 3.86" fill="none" stroke="#fbbc05" stroke-width="2.5"/><path d="M9.59 8.80 A4.55 4.55 0 0 1 1.98 8.14" fill="none" stroke="#34a853" stroke-width="2.5"/><path d="M10.55 5.84 A4.55 4.55 0 0 1 9.38 9.04" fill="none" stroke="#4285f4" stroke-width="2.5"/><rect x="6.1" y="4.9" width="5.7" height="2.35" fill="#4285f4"/></svg><svg class="a" style="left:1170.2px;top:790.5px;" width="10.6" height="11.4" viewBox="0 0 12 12" preserveAspectRatio="none"><circle cx="6" cy="6" r="6" fill="#fff"/><path d="M1.98 3.86 A4.55 4.55 0 0 1 9.38 2.96" fill="none" stroke="#ea4335" stroke-width="2.5"/><path d="M1.98 8.14 A4.55 4.55 0 0 1 1.98 3.86" fill="none" stroke="#fbbc05" stroke-width="2.5"/><path d="M9.59 8.80 A4.55 4.55 0 0 1 1.98 8.14" fill="none" stroke="#34a853" stroke-width="2.5"/><path d="M10.55 5.84 A4.55 4.55 0 0 1 9.38 9.04" fill="none" stroke="#4285f4" stroke-width="2.5"/><rect x="6.1" y="4.9" width="5.7" height="2.35" fill="#4285f4"/></svg><svg class="a" style="left:1177.0px;top:790.5px;" width="10.6" height="11.4" viewBox="0 0 12 12" preserveAspectRatio="none"><circle cx="6" cy="6" r="6" fill="#fff"/><path d="M1.98 3.86 A4.55 4.55 0 0 1 9.38 2.96" fill="none" stroke="#ea4335" stroke-width="2.5"/><path d="M1.98 8.14 A4.55 4.55 0 0 1 1.98 3.86" fill="none" stroke="#fbbc05" stroke-width="2.5"/><path d="M9.59 8.80 A4.55 4.55 0 0 1 1.98 8.14" fill="none" stroke="#34a853" stroke-width="2.5"/><path d="M10.55 5.84 A4.55 4.55 0 0 1 9.38 9.04" fill="none" stroke="#4285f4" stroke-width="2.5"/><rect x="6.1" y="4.9" width="5.7" height="2.35" fill="#4285f4"/></svg><svg class="a" style="left:1201.3px;top:790.5px;" width="10.6" height="11.4" viewBox="0 0 12 12" preserveAspectRatio="none"><circle cx="6" cy="6" r="6" fill="#fff"/><path d="M1.98 3.86 A4.55 4.55 0 0 1 9.38 2.96" fill="none" stroke="#ea4335" stroke-width="2.5"/><path d="M1.98 8.14 A4.55 4.55 0 0 1 1.98 3.86" fill="none" stroke="#fbbc05" stroke-width="2.5"/><path d="M9.59 8.80 A4.55 4.55 0 0 1 1.98 8.14" fill="none" stroke="#34a853" stroke-width="2.5"/><path d="M10.55 5.84 A4.55 4.55 0 0 1 9.38 9.04" fill="none" stroke="#4285f4" stroke-width="2.5"/><rect x="6.1" y="4.9" width="5.7" height="2.35" fill="#4285f4"/></svg><svg class="a" style="left:1213.8px;top:790.5px;" width="10.6" height="11.4" viewBox="0 0 12 12" preserveAspectRatio="none"><circle cx="6" cy="6" r="6" fill="#fff"/><path d="M1.98 3.86 A4.55 4.55 0 0 1 9.38 2.96" fill="none" stroke="#ea4335" stroke-width="2.5"/><path d="M1.98 8.14 A4.55 4.55 0 0 1 1.98 3.86" fill="none" stroke="#fbbc05" stroke-width="2.5"/><path d="M9.59 8.80 A4.55 4.55 0 0 1 1.98 8.14" fill="none" stroke="#34a853" stroke-width="2.5"/><path d="M10.55 5.84 A4.55 4.55 0 0 1 9.38 9.04" fill="none" stroke="#4285f4" stroke-width="2.5"/><rect x="6.1" y="4.9" width="5.7" height="2.35" fill="#4285f4"/></svg><svg class="a" style="left:1220.4px;top:790.5px;" width="10.6" height="11.4" viewBox="0 0 12 12" preserveAspectRatio="none"><circle cx="6" cy="6" r="6" fill="#fff"/><path d="M1.98 3.86 A4.55 4.55 0 0 1 9.38 2.96" fill="none" stroke="#ea4335" stroke-width="2.5"/><path d="M1.98 8.14 A4.55 4.55 0 0 1 1.98 3.86" fill="none" stroke="#fbbc05" stroke-width="2.5"/><path d="M9.59 8.80 A4.55 4.55 0 0 1 1.98 8.14" fill="none" stroke="#34a853" stroke-width="2.5"/><path d="M10.55 5.84 A4.55 4.55 0 0 1 9.38 9.04" fill="none" stroke="#4285f4" stroke-width="2.5"/><rect x="6.1" y="4.9" width="5.7" height="2.35" fill="#4285f4"/></svg><svg class="a" style="left:1226.5px;top:790.5px;" width="10.6" height="11.4" viewBox="0 0 12 12" preserveAspectRatio="none"><circle cx="6" cy="6" r="6" fill="#fff"/><path d="M1.98 3.86 A4.55 4.55 0 0 1 9.38 2.96" fill="none" stroke="#ea4335" stroke-width="2.5"/><path d="M1.98 8.14 A4.55 4.55 0 0 1 1.98 3.86" fill="none" stroke="#fbbc05" stroke-width="2.5"/><path d="M9.59 8.80 A4.55 4.55 0 0 1 1.98 8.14" fill="none" stroke="#34a853" stroke-width="2.5"/><path d="M10.55 5.84 A4.55 4.55 0 0 1 9.38 9.04" fill="none" stroke="#4285f4" stroke-width="2.5"/><rect x="6.1" y="4.9" width="5.7" height="2.35" fill="#4285f4"/></svg><svg class="a" style="left:1245.0px;top:790.5px;" width="10.6" height="11.4" viewBox="0 0 12 12" preserveAspectRatio="none"><circle cx="6" cy="6" r="6" fill="#fff"/><path d="M1.98 3.86 A4.55 4.55 0 0 1 9.38 2.96" fill="none" stroke="#ea4335" stroke-width="2.5"/><path d="M1.98 8.14 A4.55 4.55 0 0 1 1.98 3.86" fill="none" stroke="#fbbc05" stroke-width="2.5"/><path d="M9.59 8.80 A4.55 4.55 0 0 1 1.98 8.14" fill="none" stroke="#34a853" stroke-width="2.5"/><path d="M10.55 5.84 A4.55 4.55 0 0 1 9.38 9.04" fill="none" stroke="#4285f4" stroke-width="2.5"/><rect x="6.1" y="4.9" width="5.7" height="2.35" fill="#4285f4"/></svg><svg class="a" style="left:1281.9px;top:790.5px;" width="10.6" height="11.4" viewBox="0 0 12 12" preserveAspectRatio="none"><circle cx="6" cy="6" r="6" fill="#fff"/><path d="M1.98 3.86 A4.55 4.55 0 0 1 9.38 2.96" fill="none" stroke="#ea4335" stroke-width="2.5"/><path d="M1.98 8.14 A4.55 4.55 0 0 1 1.98 3.86" fill="none" stroke="#fbbc05" stroke-width="2.5"/><path d="M9.59 8.80 A4.55 4.55 0 0 1 1.98 8.14" fill="none" stroke="#34a853" stroke-width="2.5"/><path d="M10.55 5.84 A4.55 4.55 0 0 1 9.38 9.04" fill="none" stroke="#4285f4" stroke-width="2.5"/><rect x="6.1" y="4.9" width="5.7" height="2.35" fill="#4285f4"/></svg><svg class="a" style="left:1306.9px;top:790.5px;" width="10.6" height="11.4" viewBox="0 0 12 12" preserveAspectRatio="none"><circle cx="6" cy="6" r="6" fill="#fff"/><path d="M1.98 3.86 A4.55 4.55 0 0 1 9.38 2.96" fill="none" stroke="#ea4335" stroke-width="2.5"/><path d="M1.98 8.14 A4.55 4.55 0 0 1 1.98 3.86" fill="none" stroke="#fbbc05" stroke-width="2.5"/><path d="M9.59 8.80 A4.55 4.55 0 0 1 1.98 8.14" fill="none" stroke="#34a853" stroke-width="2.5"/><path d="M10.55 5.84 A4.55 4.55 0 0 1 9.38 9.04" fill="none" stroke="#4285f4" stroke-width="2.5"/><rect x="6.1" y="4.9" width="5.7" height="2.35" fill="#4285f4"/></svg><svg class="a" style="left:1319.6000000000001px;top:790.5px;" width="10.6" height="11.4" viewBox="0 0 12 12" preserveAspectRatio="none"><circle cx="6" cy="6" r="6" fill="#fff"/><path d="M1.98 3.86 A4.55 4.55 0 0 1 9.38 2.96" fill="none" stroke="#ea4335" stroke-width="2.5"/><path d="M1.98 8.14 A4.55 4.55 0 0 1 1.98 3.86" fill="none" stroke="#fbbc05" stroke-width="2.5"/><path d="M9.59 8.80 A4.55 4.55 0 0 1 1.98 8.14" fill="none" stroke="#34a853" stroke-width="2.5"/><path d="M10.55 5.84 A4.55 4.55 0 0 1 9.38 9.04" fill="none" stroke="#4285f4" stroke-width="2.5"/><rect x="6.1" y="4.9" width="5.7" height="2.35" fill="#4285f4"/></svg><svg class="a" style="left:1326.0px;top:790.5px;" width="10.6" height="11.4" viewBox="0 0 12 12" preserveAspectRatio="none"><circle cx="6" cy="6" r="6" fill="#fff"/><path d="M1.98 3.86 A4.55 4.55 0 0 1 9.38 2.96" fill="none" stroke="#ea4335" stroke-width="2.5"/><path d="M1.98 8.14 A4.55 4.55 0 0 1 1.98 3.86" fill="none" stroke="#fbbc05" stroke-width="2.5"/><path d="M9.59 8.80 A4.55 4.55 0 0 1 1.98 8.14" fill="none" stroke="#34a853" stroke-width="2.5"/><path d="M10.55 5.84 A4.55 4.55 0 0 1 9.38 9.04" fill="none" stroke="#4285f4" stroke-width="2.5"/><rect x="6.1" y="4.9" width="5.7" height="2.35" fill="#4285f4"/></svg><svg class="a" style="left:1337.9px;top:790.5px;" width="10.6" height="11.4" viewBox="0 0 12 12" preserveAspectRatio="none"><circle cx="6" cy="6" r="6" fill="#fff"/><path d="M1.98 3.86 A4.55 4.55 0 0 1 9.38 2.96" fill="none" stroke="#ea4335" stroke-width="2.5"/><path d="M1.98 8.14 A4.55 4.55 0 0 1 1.98 3.86" fill="none" stroke="#fbbc05" stroke-width="2.5"/><path d="M9.59 8.80 A4.55 4.55 0 0 1 1.98 8.14" fill="none" stroke="#34a853" stroke-width="2.5"/><path d="M10.55 5.84 A4.55 4.55 0 0 1 9.38 9.04" fill="none" stroke="#4285f4" stroke-width="2.5"/><rect x="6.1" y="4.9" width="5.7" height="2.35" fill="#4285f4"/></svg><svg class="a" style="left:1344.5px;top:790.5px;" width="10.6" height="11.4" viewBox="0 0 12 12" preserveAspectRatio="none"><circle cx="6" cy="6" r="6" fill="#fff"/><path d="M1.98 3.86 A4.55 4.55 0 0 1 9.38 2.96" fill="none" stroke="#ea4335" stroke-width="2.5"/><path d="M1.98 8.14 A4.55 4.55 0 0 1 1.98 3.86" fill="none" stroke="#fbbc05" stroke-width="2.5"/><path d="M9.59 8.80 A4.55 4.55 0 0 1 1.98 8.14" fill="none" stroke="#34a853" stroke-width="2.5"/><path d="M10.55 5.84 A4.55 4.55 0 0 1 9.38 9.04" fill="none" stroke="#4285f4" stroke-width="2.5"/><rect x="6.1" y="4.9" width="5.7" height="2.35" fill="#4285f4"/></svg><svg class="a" style="left:1350.9px;top:790.4px;" width="10" height="11" viewBox="0 0 10 11"><path d="M0 0 H9.8 V8.6 H2.6 L0 10.5 Z" fill="#ed2b2e"/></svg><svg class="a" style="left:1375.3px;top:790.5px;" width="10.6" height="11.4" viewBox="0 0 12 12" preserveAspectRatio="none"><circle cx="6" cy="6" r="6" fill="#fff"/><path d="M1.98 3.86 A4.55 4.55 0 0 1 9.38 2.96" fill="none" stroke="#ea4335" stroke-width="2.5"/><path d="M1.98 8.14 A4.55 4.55 0 0 1 1.98 3.86" fill="none" stroke="#fbbc05" stroke-width="2.5"/><path d="M9.59 8.80 A4.55 4.55 0 0 1 1.98 8.14" fill="none" stroke="#34a853" stroke-width="2.5"/><path d="M10.55 5.84 A4.55 4.55 0 0 1 9.38 9.04" fill="none" stroke="#4285f4" stroke-width="2.5"/><rect x="6.1" y="4.9" width="5.7" height="2.35" fill="#4285f4"/></svg><svg class="a" style="left:1381.7px;top:790.5px;" width="10.6" height="11.4" viewBox="0 0 12 12" preserveAspectRatio="none"><circle cx="6" cy="6" r="6" fill="#fff"/><path d="M1.98 3.86 A4.55 4.55 0 0 1 9.38 2.96" fill="none" stroke="#ea4335" stroke-width="2.5"/><path d="M1.98 8.14 A4.55 4.55 0 0 1 1.98 3.86" fill="none" stroke="#fbbc05" stroke-width="2.5"/><path d="M9.59 8.80 A4.55 4.55 0 0 1 1.98 8.14" fill="none" stroke="#34a853" stroke-width="2.5"/><path d="M10.55 5.84 A4.55 4.55 0 0 1 9.38 9.04" fill="none" stroke="#4285f4" stroke-width="2.5"/><rect x="6.1" y="4.9" width="5.7" height="2.35" fill="#4285f4"/></svg><svg class="a" style="left:1388.1000000000001px;top:790.5px;" width="10.6" height="11.4" viewBox="0 0 12 12" preserveAspectRatio="none"><circle cx="6" cy="6" r="6" fill="#fff"/><path d="M1.98 3.86 A4.55 4.55 0 0 1 9.38 2.96" fill="none" stroke="#ea4335" stroke-width="2.5"/><path d="M1.98 8.14 A4.55 4.55 0 0 1 1.98 3.86" fill="none" stroke="#fbbc05" stroke-width="2.5"/><path d="M9.59 8.80 A4.55 4.55 0 0 1 1.98 8.14" fill="none" stroke="#34a853" stroke-width="2.5"/><path d="M10.55 5.84 A4.55 4.55 0 0 1 9.38 9.04" fill="none" stroke="#4285f4" stroke-width="2.5"/><rect x="6.1" y="4.9" width="5.7" height="2.35" fill="#4285f4"/></svg><svg class="a" style="left:1394.4px;top:790.5px;" width="10.6" height="11.4" viewBox="0 0 12 12" preserveAspectRatio="none"><circle cx="6" cy="6" r="6" fill="#fff"/><path d="M1.98 3.86 A4.55 4.55 0 0 1 9.38 2.96" fill="none" stroke="#ea4335" stroke-width="2.5"/><path d="M1.98 8.14 A4.55 4.55 0 0 1 1.98 3.86" fill="none" stroke="#fbbc05" stroke-width="2.5"/><path d="M9.59 8.80 A4.55 4.55 0 0 1 1.98 8.14" fill="none" stroke="#34a853" stroke-width="2.5"/><path d="M10.55 5.84 A4.55 4.55 0 0 1 9.38 9.04" fill="none" stroke="#4285f4" stroke-width="2.5"/><rect x="6.1" y="4.9" width="5.7" height="2.35" fill="#4285f4"/></svg><svg class="a" style="left:1418.8px;top:790.5px;" width="10.6" height="11.4" viewBox="0 0 12 12" preserveAspectRatio="none"><circle cx="6" cy="6" r="6" fill="#fff"/><path d="M1.98 3.86 A4.55 4.55 0 0 1 9.38 2.96" fill="none" stroke="#ea4335" stroke-width="2.5"/><path d="M1.98 8.14 A4.55 4.55 0 0 1 1.98 3.86" fill="none" stroke="#fbbc05" stroke-width="2.5"/><path d="M9.59 8.80 A4.55 4.55 0 0 1 1.98 8.14" fill="none" stroke="#34a853" stroke-width="2.5"/><path d="M10.55 5.84 A4.55 4.55 0 0 1 9.38 9.04" fill="none" stroke="#4285f4" stroke-width="2.5"/><rect x="6.1" y="4.9" width="5.7" height="2.35" fill="#4285f4"/></svg><svg class="a" style="left:1425.4px;top:790.5px;" width="10.6" height="11.4" viewBox="0 0 12 12" preserveAspectRatio="none"><circle cx="6" cy="6" r="6" fill="#fff"/><path d="M1.98 3.86 A4.55 4.55 0 0 1 9.38 2.96" fill="none" stroke="#ea4335" stroke-width="2.5"/><path d="M1.98 8.14 A4.55 4.55 0 0 1 1.98 3.86" fill="none" stroke="#fbbc05" stroke-width="2.5"/><path d="M9.59 8.80 A4.55 4.55 0 0 1 1.98 8.14" fill="none" stroke="#34a853" stroke-width="2.5"/><path d="M10.55 5.84 A4.55 4.55 0 0 1 9.38 9.04" fill="none" stroke="#4285f4" stroke-width="2.5"/><rect x="6.1" y="4.9" width="5.7" height="2.35" fill="#4285f4"/></svg><svg class="a" style="left:1437.6000000000001px;top:790.5px;" width="10.6" height="11.4" viewBox="0 0 12 12" preserveAspectRatio="none"><circle cx="6" cy="6" r="6" fill="#fff"/><path d="M1.98 3.86 A4.55 4.55 0 0 1 9.38 2.96" fill="none" stroke="#ea4335" stroke-width="2.5"/><path d="M1.98 8.14 A4.55 4.55 0 0 1 1.98 3.86" fill="none" stroke="#fbbc05" stroke-width="2.5"/><path d="M9.59 8.80 A4.55 4.55 0 0 1 1.98 8.14" fill="none" stroke="#34a853" stroke-width="2.5"/><path d="M10.55 5.84 A4.55 4.55 0 0 1 9.38 9.04" fill="none" stroke="#4285f4" stroke-width="2.5"/><rect x="6.1" y="4.9" width="5.7" height="2.35" fill="#4285f4"/></svg><svg class="a" style="left:1443.9px;top:790.4px;" width="10" height="11" viewBox="0 0 10 11"><path d="M0 0 H9.8 V8.6 H2.6 L0 10.5 Z" fill="#ed2b2e"/></svg><svg class="a" style="left:1450.1000000000001px;top:790.5px;" width="10.6" height="11.4" viewBox="0 0 12 12" preserveAspectRatio="none"><circle cx="6" cy="6" r="6" fill="#fff"/><path d="M1.98 3.86 A4.55 4.55 0 0 1 9.38 2.96" fill="none" stroke="#ea4335" stroke-width="2.5"/><path d="M1.98 8.14 A4.55 4.55 0 0 1 1.98 3.86" fill="none" stroke="#fbbc05" stroke-width="2.5"/><path d="M9.59 8.80 A4.55 4.55 0 0 1 1.98 8.14" fill="none" stroke="#34a853" stroke-width="2.5"/><path d="M10.55 5.84 A4.55 4.55 0 0 1 9.38 9.04" fill="none" stroke="#4285f4" stroke-width="2.5"/><rect x="6.1" y="4.9" width="5.7" height="2.35" fill="#4285f4"/></svg><svg class="a" style="left:1456.6000000000001px;top:790.5px;" width="10.6" height="11.4" viewBox="0 0 12 12" preserveAspectRatio="none"><circle cx="6" cy="6" r="6" fill="#fff"/><path d="M1.98 3.86 A4.55 4.55 0 0 1 9.38 2.96" fill="none" stroke="#ea4335" stroke-width="2.5"/><path d="M1.98 8.14 A4.55 4.55 0 0 1 1.98 3.86" fill="none" stroke="#fbbc05" stroke-width="2.5"/><path d="M9.59 8.80 A4.55 4.55 0 0 1 1.98 8.14" fill="none" stroke="#34a853" stroke-width="2.5"/><path d="M10.55 5.84 A4.55 4.55 0 0 1 9.38 9.04" fill="none" stroke="#4285f4" stroke-width="2.5"/><rect x="6.1" y="4.9" width="5.7" height="2.35" fill="#4285f4"/></svg><svg class="a" style="left:1467.7px;top:790.5px;" width="10.6" height="11.4" viewBox="0 0 12 12" preserveAspectRatio="none"><circle cx="6" cy="6" r="6" fill="#fff"/><path d="M1.98 3.86 A4.55 4.55 0 0 1 9.38 2.96" fill="none" stroke="#ea4335" stroke-width="2.5"/><path d="M1.98 8.14 A4.55 4.55 0 0 1 1.98 3.86" fill="none" stroke="#fbbc05" stroke-width="2.5"/><path d="M9.59 8.80 A4.55 4.55 0 0 1 1.98 8.14" fill="none" stroke="#34a853" stroke-width="2.5"/><path d="M10.55 5.84 A4.55 4.55 0 0 1 9.38 9.04" fill="none" stroke="#4285f4" stroke-width="2.5"/><rect x="6.1" y="4.9" width="5.7" height="2.35" fill="#4285f4"/></svg><svg class="a" style="left:1475.2px;top:790.5px;" width="10.6" height="11.4" viewBox="0 0 12 12" preserveAspectRatio="none"><circle cx="6" cy="6" r="6" fill="#fff"/><path d="M1.98 3.86 A4.55 4.55 0 0 1 9.38 2.96" fill="none" stroke="#ea4335" stroke-width="2.5"/><path d="M1.98 8.14 A4.55 4.55 0 0 1 1.98 3.86" fill="none" stroke="#fbbc05" stroke-width="2.5"/><path d="M9.59 8.80 A4.55 4.55 0 0 1 1.98 8.14" fill="none" stroke="#34a853" stroke-width="2.5"/><path d="M10.55 5.84 A4.55 4.55 0 0 1 9.38 9.04" fill="none" stroke="#4285f4" stroke-width="2.5"/><rect x="6.1" y="4.9" width="5.7" height="2.35" fill="#4285f4"/></svg><svg class="a" style="left:1493.3px;top:790.5px;" width="10.6" height="11.4" viewBox="0 0 12 12" preserveAspectRatio="none"><circle cx="6" cy="6" r="6" fill="#fff"/><path d="M1.98 3.86 A4.55 4.55 0 0 1 9.38 2.96" fill="none" stroke="#ea4335" stroke-width="2.5"/><path d="M1.98 8.14 A4.55 4.55 0 0 1 1.98 3.86" fill="none" stroke="#fbbc05" stroke-width="2.5"/><path d="M9.59 8.80 A4.55 4.55 0 0 1 1.98 8.14" fill="none" stroke="#34a853" stroke-width="2.5"/><path d="M10.55 5.84 A4.55 4.55 0 0 1 9.38 9.04" fill="none" stroke="#4285f4" stroke-width="2.5"/><rect x="6.1" y="4.9" width="5.7" height="2.35" fill="#4285f4"/></svg>
<div class="a" style="left:1560.6px;top:745.7px;width:56.4px;height:56.4px;background:#ff642d;border-radius:50%;"></div>
<div class="a" style="left:0px;top:819px;width:1573px;height:1px;background:rgba(200,200,200,.18);"></div>
<div class="a" style="left:0px;top:820px;width:1573px;height:1px;background:#d5d5d5;"></div>
</body></html>
